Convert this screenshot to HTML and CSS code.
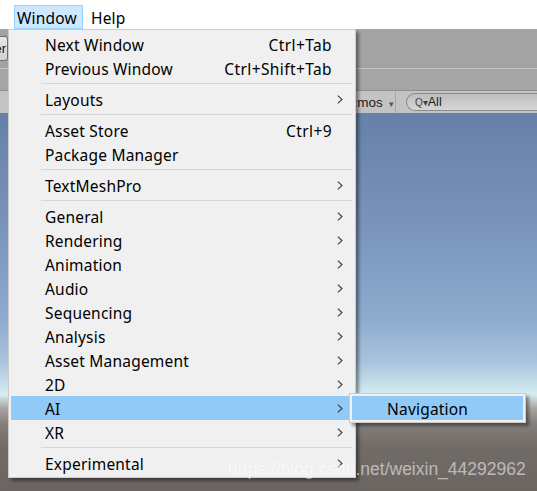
FILE: index.html
```html
<!DOCTYPE html>
<html>
<head>
<meta charset="utf-8">
<link rel="stylesheet" href="styles.css">
</head>
<body>
<div class="app">
  <div class="menubar">
    <span class="mb-cut">t</span>
    <span class="mb-item active">Window</span>
    <span class="mb-item">Help</span>
  </div>
  <div class="toolbar">
    <div class="tool-btn">Center</div>
  </div>
  <div class="tabbar"></div>
  <div class="scenebar">
    <span class="gizmos">Gizmos <span class="caret">▾</span></span>
    <span class="vsep"></span>
    <span class="search"><span class="q">Q▾</span>All</span>
  </div>
  <div class="scene"></div>

  <div class="dropdown">
    <div class="row"><span class="label">Next Window</span><span class="key">Ctrl+Tab</span><span class="arrow"></span></div>
    <div class="row"><span class="label">Previous Window</span><span class="key">Ctrl+Shift+Tab</span><span class="arrow"></span></div>
    <div class="sep"></div>
    <div class="row"><span class="label">Layouts</span><span class="arrow"><svg viewBox="0 0 6 9" width="6" height="9"><path d="M0.8 0.6 L5 4.5 L0.8 8.4"/></svg></span></div>
    <div class="sep"></div>
    <div class="row"><span class="label">Asset Store</span><span class="key">Ctrl+9</span><span class="arrow"></span></div>
    <div class="row"><span class="label">Package Manager</span><span class="arrow"></span></div>
    <div class="sep"></div>
    <div class="row"><span class="label">TextMeshPro</span><span class="arrow"><svg viewBox="0 0 6 9" width="6" height="9"><path d="M0.8 0.6 L5 4.5 L0.8 8.4"/></svg></span></div>
    <div class="sep"></div>
    <div class="row"><span class="label">General</span><span class="arrow"><svg viewBox="0 0 6 9" width="6" height="9"><path d="M0.8 0.6 L5 4.5 L0.8 8.4"/></svg></span></div>
    <div class="row"><span class="label">Rendering</span><span class="arrow"><svg viewBox="0 0 6 9" width="6" height="9"><path d="M0.8 0.6 L5 4.5 L0.8 8.4"/></svg></span></div>
    <div class="row"><span class="label">Animation</span><span class="arrow"><svg viewBox="0 0 6 9" width="6" height="9"><path d="M0.8 0.6 L5 4.5 L0.8 8.4"/></svg></span></div>
    <div class="row"><span class="label">Audio</span><span class="arrow"><svg viewBox="0 0 6 9" width="6" height="9"><path d="M0.8 0.6 L5 4.5 L0.8 8.4"/></svg></span></div>
    <div class="row"><span class="label">Sequencing</span><span class="arrow"><svg viewBox="0 0 6 9" width="6" height="9"><path d="M0.8 0.6 L5 4.5 L0.8 8.4"/></svg></span></div>
    <div class="row"><span class="label">Analysis</span><span class="arrow"><svg viewBox="0 0 6 9" width="6" height="9"><path d="M0.8 0.6 L5 4.5 L0.8 8.4"/></svg></span></div>
    <div class="row"><span class="label">Asset Management</span><span class="arrow"><svg viewBox="0 0 6 9" width="6" height="9"><path d="M0.8 0.6 L5 4.5 L0.8 8.4"/></svg></span></div>
    <div class="row"><span class="label">2D</span><span class="arrow"><svg viewBox="0 0 6 9" width="6" height="9"><path d="M0.8 0.6 L5 4.5 L0.8 8.4"/></svg></span></div>
    <div class="row hl"><span class="label">AI</span><span class="arrow"><svg viewBox="0 0 6 9" width="6" height="9"><path d="M0.8 0.6 L5 4.5 L0.8 8.4"/></svg></span></div>
    <div class="row"><span class="label">XR</span><span class="arrow"><svg viewBox="0 0 6 9" width="6" height="9"><path d="M0.8 0.6 L5 4.5 L0.8 8.4"/></svg></span></div>
    <div class="sep"></div>
    <div class="row"><span class="label">Experimental</span><span class="arrow"><svg viewBox="0 0 6 9" width="6" height="9"><path d="M0.8 0.6 L5 4.5 L0.8 8.4"/></svg></span></div>
  </div>

  <div class="submenu">
    <div class="row hl sub"><span class="label">Navigation</span></div>
  </div>

  <div class="watermark">https://blog.csdn.net/weixin_44292962</div>
</div>
</body>
</html>
```

FILE: styles.css
```css
* { box-sizing: border-box; }
html, body { margin: 0; padding: 0; }
body {
  width: 537px;
  height: 491px;
  overflow: hidden;
  font-family: "Noto Sans", "Liberation Sans", sans-serif;
}
.app {
  position: relative;
  width: 537px;
  height: 491px;
  display: flex;
  flex-direction: column;
  overflow: hidden;
}

/* top menu bar */
.menubar {
  height: 29px;
  background: #ffffff;
  display: flex;
  align-items: stretch;
  padding-top: 5px;
  font-size: 15.5px;
  letter-spacing: 0.2px;
  color: #000;
}
.mb-cut {
  width: 14px;
  color: #2a7fd4;
  text-indent: -6px;
  overflow: hidden;
  line-height: 22px;
  padding-top: 1px;
}
.mb-item {
  padding: 1px 6px 0 2px;
  line-height: 22px;
  border: 1px solid transparent;
}
.mb-item.active {
  background: #cce8ff;
  border-color: #99d1ff;
  padding-right: 5px;
  margin-right: 5px;
}

/* unity toolbar area */
.toolbar {
  height: 39px;
  background: #a3a3a3;
  display: flex;
  align-items: center;
  font-family: "Liberation Sans", sans-serif;
  font-size: 13px;
}
.tool-btn {
  margin-left: -40px;
  width: 48px;
  height: 25px;
  border: 1px solid #6e6e6e;
  border-radius: 3px;
  background: linear-gradient(#e6e6e6, #d2d2d2);
  line-height: 23px;
  text-align: right;
  padding-right: 1px;
  color: #111;
}
.tabbar {
  height: 22px;
  background: #a5a5a5;
  border-top: 1px solid #c7c7c7;
}
.scenebar {
  height: 23px;
  background: #c3c3c3;
  border-top: 1px solid #8f8f8f;
  display: flex;
  align-items: center;
  padding-left: 337px;
  font-family: "Liberation Sans", sans-serif;
  font-size: 13.5px;
  color: #1a1a1a;
}
.gizmos { width: 58px; }
.caret { font-size: 9px; color: #555; margin-left: 2px; }
.vsep {
  width: 1px;
  height: 22px;
  background: #a8a8a8;
  margin-right: 10px;
}
.search {
  flex: 1;
  height: 18px;
  border: 1px solid #8a8a8a;
  border-right: none;
  border-radius: 9px 0 0 9px;
  background: linear-gradient(#bdbdbd, #d6d6d6);
  padding-left: 8px;
  line-height: 16px;
  font-size: 12.5px;
  color: #222;
}
.q { font-size: 10px; color: #444; }
.scene {
  flex: 1;
  background: linear-gradient(
    #6681a9 0%,
    #7690b7 25%,
    #8faccf 55%,
    #a9c4dc 66%,
    #c9e0ea 72%,
    #d6eef2 74.5%,
    #aaa7a3 78%,
    #85807c 82%,
    #726c69 88%,
    #6b6562 100%
  );
}

/* dropdown */
.dropdown {
  position: absolute;
  left: 8px;
  top: 29px;
  width: 348px;
  padding: 2px;
  background: #f0f0f0;
  border: 1px solid #cccccc;
  box-shadow: 3px 3px 3px rgba(0,0,0,0.4);
  font-size: 15.5px;
  letter-spacing: 0.2px;
  color: #000;
}
.row {
  height: 24px;
  display: flex;
  align-items: center;
  padding: 1px 10px 0 34px;
}
.row .label { flex: 1; white-space: nowrap; }
.row .key { margin-right: 5px; white-space: nowrap; letter-spacing: 0.4px; }
.row .arrow { width: 6px; height: 9px; display: flex; margin-top: -1px; }
.arrow svg path {
  fill: none;
  stroke: #3c3c3c;
  stroke-width: 1.1;
}
.row.hl { background: #91c9f7; }
.sep {
  height: 7px;
  display: flex;
  align-items: center;
  padding-left: 30px;
  padding-right: 1px;
}
.sep::before {
  content: "";
  flex: 1;
  height: 1px;
  background: #d5d5d5;
}

.submenu {
  position: absolute;
  left: 349px;
  top: 393px;
  width: 177px;
  padding: 2px;
  background: #f0f0f0;
  border: 1px solid #cccccc;
  box-shadow: 3px 3px 3px rgba(0,0,0,0.4);
  font-size: 15.5px;
  letter-spacing: 0.2px;
}
.row.sub { padding-left: 35px; }

.watermark {
  position: absolute;
  left: 228px;
  top: 459px;
  font-family: "Liberation Sans", sans-serif;
  font-size: 17.5px;
  color: rgba(255,255,255,0.55);
  white-space: nowrap;
}
```
